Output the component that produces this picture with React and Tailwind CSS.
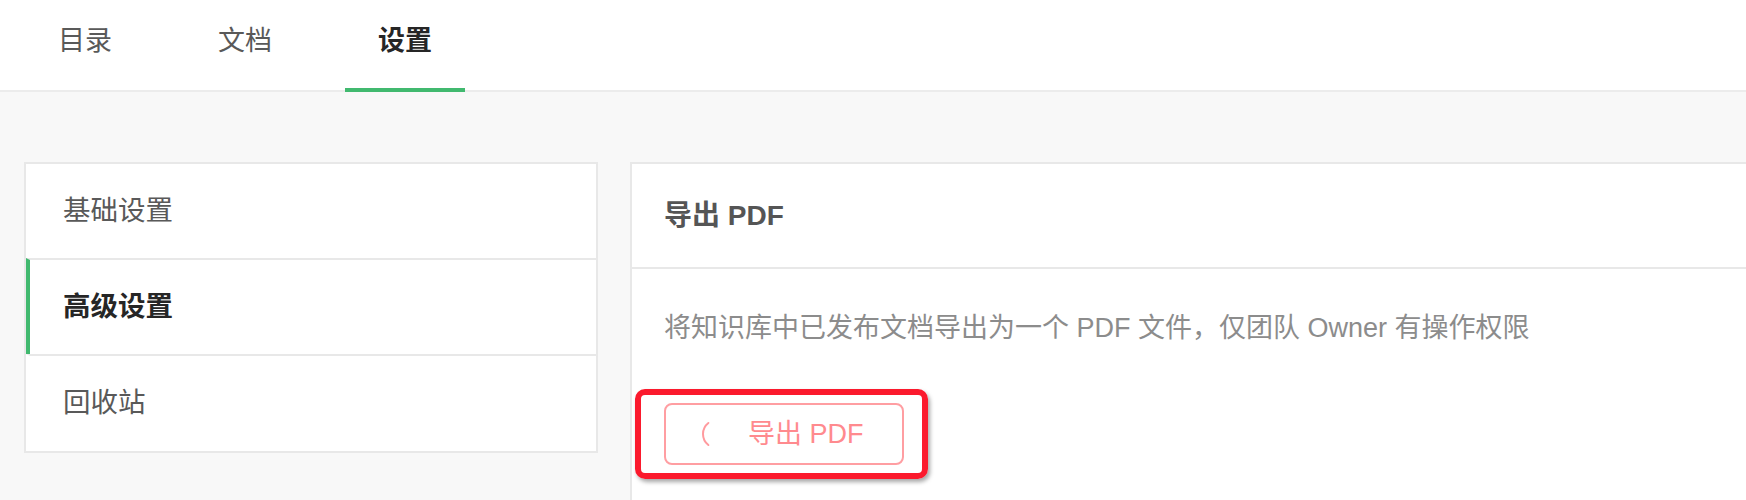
import React from "react";

const FONT = { fontFamily: '"Liberation Sans", "Noto Sans CJK SC", sans-serif' };

function Spinner() {
  // arc of a circle, visible as "(" on the left side
  const cx = 16, cy = 16, r = 14;
  const a = (52 * Math.PI) / 180;
  const x1 = cx - r * Math.cos(a);
  const y1 = cy - r * Math.sin(a);
  const y2 = cy + r * Math.sin(a);
  return (
    <svg width="32" height="32" viewBox="0 0 32 32" className="shrink-0">
      <path
        d={`M ${x1} ${y1} A ${r} ${r} 0 0 0 ${x1} ${y2}`}
        fill="none"
        stroke="#ff9a9e"
        strokeWidth="2"
        strokeLinecap="round"
      />
    </svg>
  );
}

export default function App() {
  const tabs = [
    { label: "目录", active: false },
    { label: "文档", active: false },
    { label: "设置", active: true },
  ];
  const menu = [
    { label: "基础设置", active: false },
    { label: "高级设置", active: true },
    { label: "回收站", active: false },
  ];
  return (
    <div className="h-[500px] w-full overflow-hidden bg-[#f8f8f8]" style={FONT}>
      {/* Header tabs */}
      <div className="flex h-[92px] gap-[40px] border-b-2 border-[#ececec] bg-white pl-[25px]">
        {tabs.map((t) => (
          <div
            key={t.label}
            className={
              "-mb-[2px] h-[92px] w-[120px] border-b-4 pt-[21px] text-center text-[27px] leading-[40px] " +
              (t.active
                ? "border-[#41b96f] font-bold text-[#262626]"
                : "border-transparent text-[#595959]")
            }
          >
            {t.label}
          </div>
        ))}
      </div>

      {/* Body */}
      <div className="flex gap-[32px] pl-[24px] pt-[70px]">
        {/* Sidebar */}
        <div className="flex w-[574px] shrink-0 flex-col self-start border-2 border-[#e8e8e8] bg-white">
          {menu.map((m, i) => (
            <div
              key={m.label}
              className={
                "flex items-center border-l-4 pl-[33px] text-[27.5px] " +
                (i > 0 ? "h-[96px] border-t-2 border-t-[#e8e8e8] " : "h-[94px] ") +
                (i === 2 ? "pb-[1px] h-[97px] " : "") +
                (m.active
                  ? "border-l-[#41b96f] font-bold text-[#262626]"
                  : "border-l-transparent text-[#595959]")
              }
            >
              {m.label}
            </div>
          ))}
        </div>

        {/* Main panel */}
        <div className="h-[600px] w-[1300px] shrink-0 border-2 border-[#e8e8e8] bg-white">
          <div className="flex h-[105px] items-center border-b-2 border-[#e8e8e8] px-[32px] text-[28px] font-semibold text-[#555555]">
            导出 PDF
          </div>
          <div className="px-[32px] pt-[39px]">
            <div className="text-[27px] leading-[40px] text-[#8c8c8c]">
              将知识库中已发布文档导出为一个 PDF 文件，仅团队 Owner 有操作权限
            </div>
            <div className="mt-[55px]">
              <div className="relative inline-block">
                <button className="flex h-[62px] w-[240px] items-center rounded-[8px] border-2 border-[#ff9ea2] bg-white pl-[35px] text-[27px] text-[#ff8a8e]">
                  <Spinner />
                  <span className="ml-[15px]">导出 PDF</span>
                </button>
                <span className="pointer-events-none absolute -bottom-[14px] -left-[29px] -right-[24px] -top-[14px] rounded-[10px] border-[6px] border-[#fb1a2d] shadow-[2px_3px_4px_rgba(0,0,0,0.35)]" />
              </div>
            </div>
          </div>
        </div>
      </div>
    </div>
  );
}
